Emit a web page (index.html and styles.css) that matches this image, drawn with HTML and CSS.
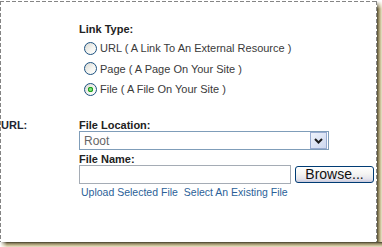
FILE: index.html
```html
<!DOCTYPE html>
<html lang="en">

<head>
	<meta charset="UTF-8">
	<meta name="viewport" content="width=device-width, initial-scale=1.0">
	<title>Link</title>
	<link rel="stylesheet" href="styles.css">
</head>

<body>

	<div class="shot">
		<div class="shot__row">
			<div class="frame">
				<div class="form">
					<div class="form__label"></div>
					<div class="form__field">
						<div class="caption">Link Type:</div>
						<label class="choice"><input type="radio" name="link_type">URL ( A Link To An External Resource )</label>
						<label class="choice"><input type="radio" name="link_type">Page ( A Page On Your Site )</label>
						<label class="choice"><input type="radio" name="link_type" checked>File ( A File On Your Site )</label>
					</div>

					<div class="form__label caption">URL:</div>
					<div class="form__field">
						<div class="caption">File Location:</div>
						<div class="select">
							<span class="select__value">Root</span>
							<span class="select__btn">
								<svg width="9" height="6" viewBox="0 0 9 6">
									<polyline points="1,1 4.5,4.5 8,1" fill="none" stroke="#1d1d1d" stroke-width="2"/>
								</svg>
							</span>
						</div>
						<div class="caption caption--name">File Name:</div>
						<div class="file">
							<input type="text" class="file__input">
							<button class="file__browse">Browse...</button>
						</div>
						<div class="links">
							<a href="#">Upload Selected File</a>
							<a href="#">Select An Existing File</a>
						</div>
					</div>
				</div>
			</div>
			<div class="shadow-right"></div>
		</div>
		<div class="shadow-bottom"></div>
	</div>

</body>

</html>
```

FILE: styles.css
```css
html,
body {
	margin: 0;
	background: #fff;
}

.shot {
	width: 382px;
	height: 247px;
	padding-top: 1px;
	box-sizing: border-box;
	overflow: hidden;
}

.shot__row {
	display: flex;
	height: 241px;
}

/* dashed edge drawn as 4px dash / 2px gap */
.frame {
	width: 377px;
	flex: none;
	background:
		repeating-linear-gradient(90deg, #858585 0 4px, transparent 4px 6px) top left / 100% 1px no-repeat,
		repeating-linear-gradient(180deg, #858585 0 4px, transparent 4px 6px) top left / 1px 100% no-repeat,
		repeating-linear-gradient(180deg, #858585 0 4px, transparent 4px 6px) top right / 1px 100% no-repeat,
		#fff;
}

.shadow-right {
	width: 5px;
	flex: none;
	background:
		linear-gradient(#fff, rgba(255, 255, 255, 0) 8px),
		linear-gradient(90deg, #4e4932, #958a60 35%, #c7bc92 65%, #e9e3cb);
}

.shadow-bottom {
	height: 5px;
	background:
		linear-gradient(90deg, #fff, rgba(255, 255, 255, 0) 7px),
		linear-gradient(180deg, #3f3b28, #8c8260 30%, #c4b990 65%, #e8e1c8);
}

.form {
	display: grid;
	grid-template-columns: 78px 1fr;
	row-gap: 19.5px;
	padding: 22px 0 0 1px;
}

.caption {
	font: bold 11px/12px "Liberation Sans", Arial, sans-serif;
	color: #222;
}

.form__label {
	color: #1f2633;
}

.choice {
	display: flex;
	align-items: center;
	height: 20.5px;
	padding-left: 5px;
	font: 11px "Liberation Sans", Arial, sans-serif;
	color: #3a3a3a;
	white-space: pre;
}

.form__field > .caption:first-child + .choice {
	margin-top: 3px;
}

.choice input {
	appearance: none;
	-webkit-appearance: none;
	width: 13px;
	height: 13px;
	margin: 0 3px 0 0;
	border: 1px solid #1c5180;
	border-radius: 50%;
	box-sizing: border-box;
	background: linear-gradient(135deg, #d8d8d2, #f4f4f0 55%, #fff);
}

.choice input:checked {
	background:
		radial-gradient(circle, #7ee07e 0 1px, #21a121 2px, #21a121 2.5px, transparent 3px),
		linear-gradient(135deg, #d8d8d2, #f4f4f0 55%, #fff);
}

.select {
	display: flex;
	align-items: center;
	width: 250px;
	height: 19px;
	box-sizing: border-box;
	border: 1px solid #7f9db9;
	background: #fff;
}

.select__value {
	flex: 1;
	padding-left: 4px;
	font: 12px "Liberation Sans", Arial, sans-serif;
	color: #666;
}

.select__btn {
	display: flex;
	align-items: center;
	justify-content: center;
	width: 15px;
	height: 15px;
	margin-right: 1px;
	border: 1px solid #98abd0;
	background: linear-gradient(135deg, #eef2fb, #cdd8ef);
}

.caption--name {
	margin-top: 3px;
}

.file {
	display: flex;
	align-items: center;
	gap: 4px;
}

.file__input {
	width: 212px;
	height: 19px;
	margin: 0;
	box-sizing: border-box;
	border: 1px solid #a5acb5;
	padding: 0 3px;
}

.file__browse {
	width: 79px;
	height: 17px;
	padding: 0;
	box-sizing: border-box;
	border: 1px solid #003c74;
	border-radius: 3px;
	background: linear-gradient(#ffffff, #f5f5f2 45%, #e4e4ec 80%, #c9c9dc);
	font: 14px/15px "Liberation Sans", Arial, sans-serif;
	color: #111;
}

.links {
	margin-top: 2px;
	padding-left: 2px;
	font: 10.5px/12px "Liberation Sans", Arial, sans-serif;
}

.links a {
	color: #2b5f98;
	text-decoration: none;
	margin-right: 3px;
}
```
